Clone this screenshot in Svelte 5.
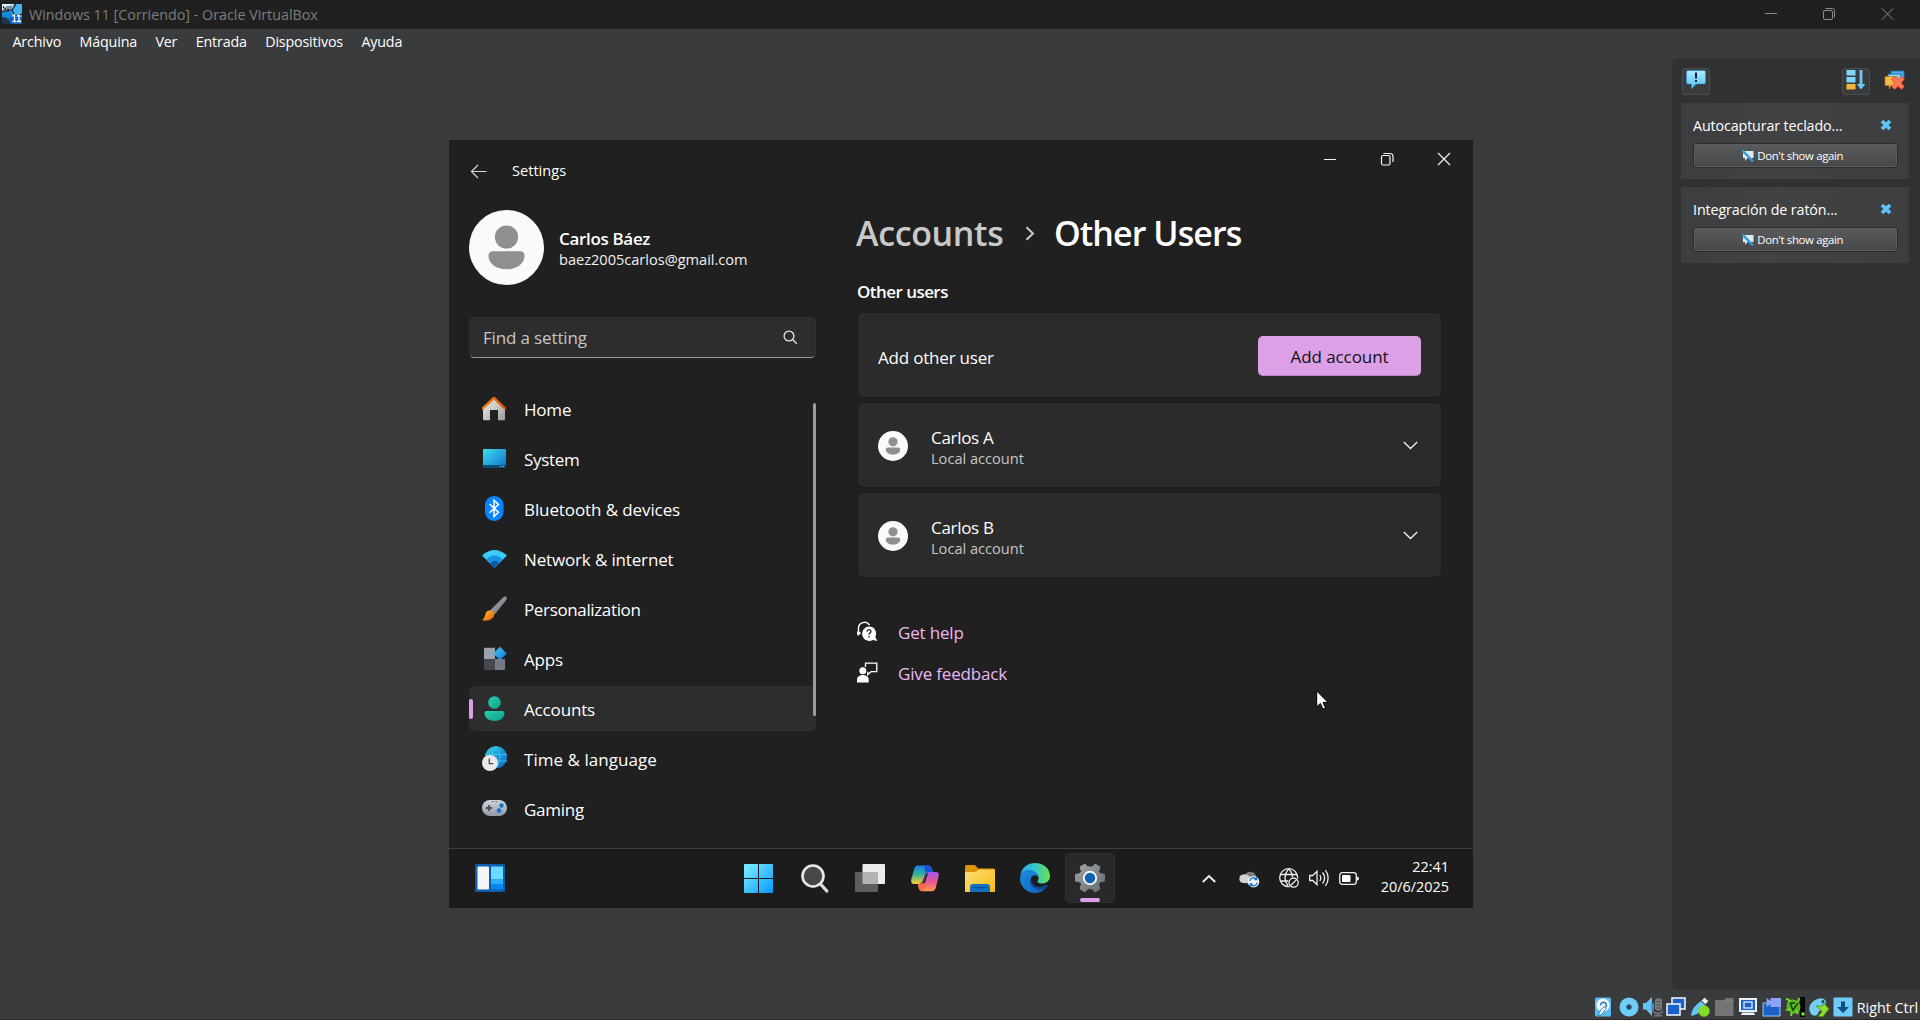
<script>
  const menus = ['Archivo', 'Máquina', 'Ver', 'Entrada', 'Dispositivos', 'Ayuda'];
  const notices = [
    { title: 'Autocapturar teclado...', spacing: -0.13 },
    { title: 'Integración de ratón...', spacing: -0.11 }
  ];
  const nav = [
    { id: 'home', label: 'Home', spacing: -0.2 },
    { id: 'system', label: 'System', spacing: -0.3 },
    { id: 'bluetooth', label: 'Bluetooth & devices', spacing: -0.1 },
    { id: 'network', label: 'Network & internet', spacing: -0.15 },
    { id: 'personalization', label: 'Personalization', spacing: -0.36 },
    { id: 'apps', label: 'Apps', spacing: -0.2 },
    { id: 'accounts', label: 'Accounts', spacing: -0.15, active: true },
    { id: 'time', label: 'Time & language', spacing: 0.05 },
    { id: 'gaming', label: 'Gaming', spacing: -0.25 }
  ];
  const users = ['Carlos A', 'Carlos B'];
</script>

{#snippet person(size)}
  <svg class="person" width={size} height={size} viewBox="0 0 75 75">
    <circle cx="37.5" cy="37.5" r="37.5" fill="#fafafa" />
    <circle cx="37.5" cy="27" r="11.6" fill="#8f8f8f" />
    <path d="M24 41.2h27q4.5 0 4.5 4.5c0 8-8 13.6-18 13.6s-18-5.600-18-13.600q0-4.500 4.500-4.500z" fill="#8f8f8f" />
  </svg>
{/snippet}

{#snippet navIcon(id)}
  <svg class="nav-icon" width="25" height="25" viewBox="0 0 25 25">
    {#if id === 'home'}
      <path d="M1 12 12 2l11 10v11q0 1.300-1.300 1.300H16V14H8v10.300H2.300Q1 24.300 1 23z" fill="url(#gHome)" />
      <path d="M1 12.300 12 2l11 10.300" fill="none" stroke="url(#gRoof)" stroke-width="2.500" stroke-linecap="round" stroke-linejoin="round" />
    {:else if id === 'system'}
      <rect x="1" y="3" width="23" height="19" rx="1" fill="url(#gSys)" />
      <path d="M1 19h23v2q0 1-1 1H2q-1 0-1-1z" fill="#084c78" />
      <path d="M18 20.500h1.200M20.500 20.500h1.200" stroke="#9fdcff" />
    {:else if id === 'bluetooth'}
      <rect x="3" y="0" width="18.500" height="25" rx="9" fill="#0a84ff" />
      <path d="M7.500 8 16.500 16.200 12 20.500V4.300l4.500 4.200-9 8.200" fill="none" stroke="#fff" stroke-width="1.500" />
    {:else if id === 'network'}
      <path d="M0 9.500Q12.500-1.500 25 9.500L12.500 22z" fill="#3bcbf6" />
      <path d="M4.300 13.500q8.200-8 16.400 0L12.500 22z" fill="#1a90e0" />
      <path d="M8 17q4.500-4.500 9 0l-4.500 5z" fill="#0b5aa8" />
    {:else if id === 'personalization'}
      <path d="M24 .8q1.500 1.200 0 3.500L13 18.300 8.500 14 20.500 2Q22.800 0 24 .8z" fill="url(#gBrush)" />
      <path d="M8 14.200q3.800.3 4.500 4C11 24.500 5 24.800 1 24.500q-1-.5 0-1.300C4.500 20 2 15 8 14.200z" fill="url(#gTip)" />
    {:else if id === 'apps'}
      <path d="M2 3q0-1.200 1-1.200h10v11.200H2z" fill="#9ba3ae" />
      <path d="M2 13h11v11H3q-1 0-1-1z" fill="#45494f" />
      <path d="M13 13h10v10q0 1-1 1h-9z" fill="#747b86" />
      <path d="m18 .7 6.700 6.800-6.700 6.800-6.700-6.800z" fill="url(#gDia)" />
    {:else if id === 'accounts'}
      <circle cx="12.500" cy="6.500" r="6.300" fill="url(#gTeal)" />
      <path d="M4.500 15h16q2 0 2 2c0 5-4.500 8-10 8s-10-3-10-8q0-2 2-2z" fill="url(#gTeal)" />
    {:else if id === 'time'}
      <circle cx="14" cy="11.200" r="11" fill="url(#gGlobe)" />
      <path d="M3 8.500h22M5 15h20M14 0q-8 11 0 22M14 0q8 11 0 22" fill="none" stroke="#3fc3ee" stroke-width=".9" />
      <circle cx="8" cy="17" r="8" fill="#e9e9ec" />
      <path d="M7.300 12.500V17.700h4" fill="none" stroke="#444" stroke-width="1.300" />
    {:else}
      <rect x="0" y="4" width="25" height="16" rx="8" fill="url(#gPad)" />
      <path d="M4 12h6M7 9v6" stroke="#4a4f57" stroke-width="1.800" />
      <circle cx="19.500" cy="9.500" r="2.200" fill="#0f72cc" />
      <circle cx="17" cy="14.500" r="2.200" fill="#0f72cc" />
      <path d="M10 5.500h1.500M13.500 5.500H15" stroke="#555" />
    {/if}
  </svg>
{/snippet}

<svg class="defs" width="0" height="0" aria-hidden="true">
  <defs>
    <linearGradient id="gHome" x1="0" y1="0" x2="1" y2="1"><stop stop-color="#f2f2f2" /><stop offset="1" stop-color="#9d9d9d" /></linearGradient>
    <linearGradient id="gRoof"><stop stop-color="#f08a1a" /><stop offset="1" stop-color="#dd4f0d" /></linearGradient>
    <linearGradient id="gSys" x1="0" y1="0" x2="1" y2="1"><stop stop-color="#3fe0ec" /><stop offset="1" stop-color="#0a6ed0" /></linearGradient>
    <linearGradient id="gBrush" x1="0" y1="0" x2="1" y2="1"><stop stop-color="#b4b9bf" /><stop offset="1" stop-color="#5f656b" /></linearGradient>
    <linearGradient id="gTip" x1="0" y1="0" x2="1" y2="1"><stop stop-color="#ffc21f" /><stop offset="1" stop-color="#ef5b14" /></linearGradient>
    <linearGradient id="gDia" x1="0" y1="0" x2="1" y2="1"><stop stop-color="#4ccbf5" /><stop offset="1" stop-color="#0c72d6" /></linearGradient>
    <linearGradient id="gTeal" x1="0" y1="0" x2="1" y2="1"><stop stop-color="#27d3b4" /><stop offset="1" stop-color="#109a86" /></linearGradient>
    <linearGradient id="gGlobe" x1="0" y1="0" x2="1" y2="1"><stop stop-color="#35d2e8" /><stop offset="1" stop-color="#0d64c4" /></linearGradient>
    <linearGradient id="gPad" x1="0" y1="0" x2="0" y2="1"><stop stop-color="#d0d6dd" /><stop offset="1" stop-color="#8f98a3" /></linearGradient>
    <linearGradient id="gWin" x1="0" y1="0" x2="1" y2="1"><stop stop-color="#7ef3ff" /><stop offset="1" stop-color="#0697ff" /></linearGradient>
    <linearGradient id="gCopA" x1="0" y1="0" x2="0" y2="1"><stop stop-color="#1b7fe8" /><stop offset=".45" stop-color="#2fae9e" /><stop offset="1" stop-color="#ffd02a" /></linearGradient>
    <linearGradient id="gCopB" x1="0" y1="0" x2="0" y2="1"><stop stop-color="#a159ec" /><stop offset=".5" stop-color="#e85598" /><stop offset="1" stop-color="#ff9a4a" /></linearGradient>
    <linearGradient id="gFold" x1="0" y1="0" x2="1" y2="1"><stop stop-color="#ffe07a" /><stop offset="1" stop-color="#fbb80f" /></linearGradient>
    <linearGradient id="gEdge"><stop stop-color="#2ba8ea" /><stop offset=".5" stop-color="#35c5c9" /><stop offset="1" stop-color="#6ae34b" /></linearGradient>
    <linearGradient id="gEdgeB" x1="0" y1="0" x2="1" y2="1"><stop stop-color="#1a8ee0" /><stop offset="1" stop-color="#0f5fb5" /></linearGradient>
    <linearGradient id="gGear" x1="0" y1="0" x2="1" y2="1"><stop stop-color="#a0a5aa" /><stop offset="1" stop-color="#646a71" /></linearGradient>
    <linearGradient id="gVb" x1="0" y1="0" x2="0" y2="1"><stop stop-color="#aeeaff" /><stop offset="1" stop-color="#4fc0f5" /></linearGradient>
  </defs>
</svg>

<div class="vm">
  <header class="titlebar">
    <svg width="20" height="20" viewBox="0 0 20 20">
      <rect width="20" height="20" fill="#46b2ee" />
      <path d="M0 0h11l-1 7H0z" fill="#e4f4fb" />
      <path d="M0 7h9l2 6H7L0 20z" fill="#1989d6" />
      <path d="M7 13h13v7H2z" fill="#1263b8" />
      <path d="M0 7.500 10 6 14 0M10 6l3 6 7-2" fill="none" stroke="#16263c" stroke-width="1.300" />
      <path d="M0 13l5 1 4 6H0z" fill="#21344f" />
      <path d="M1.500 2v2h2v1.500h-2M5 2v3.500h2V2M9 1.500v4" fill="none" stroke="#222" />
      <path d="m10.500 12 2-1v6.500M10.500 17.500h4M15 12l2-1v6.500M15 17.500h4" fill="none" stroke="#fff" stroke-width="1.300" />
    </svg>
    <span>Windows 11 [Corriendo] - Oracle VirtualBox</span>
    <svg class="host-controls" width="134" height="14" viewBox="0 0 134 14" fill="none" stroke="#8a8a8a">
      <path d="M5 6.500h12M122 1.500l11 11M133 1.500l-11 11" />
      <rect x="63.500" y="3.500" width="9" height="9" rx="1.500" />
      <path d="M65.500 1.500h7q2 0 2 2v7" />
    </svg>
  </header>

  <nav class="menubar">
    {#each menus as m}<span>{m}</span>{/each}
  </nav>

  <div class="workspace">
    <div class="guest">
      <div class="settings">
        <aside class="side">
          <div class="app-head">
            <svg width="18" height="15" viewBox="0 0 18 15" fill="none" stroke="#d8d8d8" stroke-width="1.200"><path d="M16.500 7.500H1.500M8 1 1.500 7.500 8 14" /></svg>
            <span>Settings</span>
          </div>
          <div class="profile">
            {@render person(75)}
            <div>
              <div class="name">Carlos Báez</div>
              <div class="email">baez2005carlos@gmail.com</div>
            </div>
          </div>
          <div class="search">
            <span>Find a setting</span>
            <svg width="15" height="15" viewBox="0 0 15 15" fill="none" stroke="#e8e8e8" stroke-width="1.300"><circle cx="6" cy="6" r="4.900" /><path d="m9.500 9.500 4.300 4.300" /></svg>
          </div>
          <div class="nav">
            {#each nav as item}
              <div class="nav-row" class:active={item.active}>
                {@render navIcon(item.id)}
                <span style:letter-spacing="{item.spacing}px">{item.label}</span>
              </div>
            {/each}
            <div class="scroll"></div>
          </div>
        </aside>

        <main>
          <div class="controls">
            <svg width="171" height="38" viewBox="0 0 171 38" fill="none" stroke="#f2f2f2" stroke-width="1.200">
              <path d="M22 19.500h12M136 13l12 12M148 13l-12 12" />
              <rect x="79.500" y="15.500" width="8.500" height="9.500" rx="1.500" />
              <path d="M81.500 13.500h6.500q3 0 3 3V22" />
            </svg>
          </div>
          <h1>
            <span class="crumb">Accounts</span>
            <svg width="10" height="15" viewBox="0 0 10 15" fill="none" stroke="#c8c8c8" stroke-width="2.100"><path d="m1.500 1.200 6.500 6.300-6.500 6.300" /></svg>
            <span class="here">Other Users</span>
          </h1>
          <h2>Other users</h2>
          <div class="cards">
            <div class="card">
              <span class="add-label">Add other user</span>
              <button>Add account</button>
            </div>
            {#each users as u}
              <div class="card">
                {@render person(30)}
                <div class="user">
                  <div class="user-name">{u}</div>
                  <div class="user-type">Local account</div>
                </div>
                <svg class="chev" width="15" height="9" viewBox="0 0 15 9" fill="none" stroke="#eee" stroke-width="1.400"><path d="m.8 1 6.700 6.500L14.200 1" /></svg>
              </div>
            {/each}
          </div>
          <div class="links">
            <div class="link">
              <svg width="21" height="21" viewBox="0 0 21 21">
                <path d="M1.500 14.200V7.500a6 6 0 0 1 11-3.500" fill="none" stroke="#fff" stroke-width="1.400" />
                <path d="M0 10.500 3.500 11v2L.3 14.500z" fill="#fff" />
                <path d="M12 5.500a7 7 0 0 1 6.300 10.200l2 4.300-4.500-1A7.200 7.200 0 1 1 12 5.500z" fill="#fff" />
                <path d="M10 10.700q.2-2 2-2t2 1.700c0 1.500-2 1.600-2 3.300M12 15v1.500" fill="none" stroke="#222" stroke-width="1.300" />
              </svg>
              <span>Get help</span>
            </div>
            <div class="link">
              <svg width="21" height="21" viewBox="0 0 21 21">
                <path d="M8.500 5V1.200h11.300v8.500H14l-3.300 3V9.700" fill="none" stroke="#fff" stroke-width="1.300" />
                <circle cx="5.800" cy="8.800" r="3.500" fill="#fff" />
                <path d="M0 20.500v-3c0-6 11.700-6 11.700 0v3z" fill="#fff" />
              </svg>
              <span>Give feedback</span>
            </div>
          </div>
        </main>
      </div>

      <footer class="taskbar">
        <svg width="30" height="28" viewBox="0 0 30 28">
          <rect width="30" height="28" rx="1.500" fill="#0c5fae" />
          <rect x="2.500" y="2.500" width="11.500" height="23" rx="1" fill="#f4f4f4" />
          <path d="M16 2.500h12v13H16z" fill="#6adaff" /><path d="M16 15.500h12v5H16z" fill="#26b0fa" /><path d="M16 20.500h12v5H16z" fill="#0a84ee" />
        </svg>
        <div class="apps">
          <div class="app start">
            <svg width="29" height="29" viewBox="0 0 29 29"><path d="M1 0h13v14H0V1q0-1 1-1zM15 0h13q1 0 1 1v13H15zM0 15h14v14H1q-1 0-1-1zM15 15h14v13q0 1-1 1H15z" fill="url(#gWin)" /></svg>
          </div>
          <div class="app">
            <svg width="28" height="29" viewBox="0 0 28 29"><path d="m19.500 20 6.300 7" stroke="#dcdce0" stroke-width="3.200" stroke-linecap="round" /><circle cx="12" cy="12" r="10.500" fill="#474747" stroke="#e9e9ec" stroke-width="2.600" /></svg>
          </div>
          <div class="app">
            <svg width="30" height="28" viewBox="0 0 30 28"><rect x="7.500" width="22.500" height="20" rx="1" fill="#ececec" /><rect y="8" width="23" height="20" rx="1" fill="#5e5e5e" /><path d="M7.500 8H23v12H7.500z" fill="#b2b2b2" /></svg>
          </div>
          <div class="app">
            <svg width="28" height="27" viewBox="0 0 28 27">
              <path d="M7 .5h10q3 0 4 3.500L22 7h-4.500q-2 0-3 2L11 17q-1 2-3.500 2H3Q-.8 19 .4 14L3 4.500Q4 .5 7 .5z" fill="url(#gCopA)" />
              <path d="M13 .5h4q3 0 4 3.500L22 7h-4.500q-2 0-3 2z" fill="#1c50d8" />
              <path d="M20.500 7H25q3.700 0 2.600 4.500L25 22q-1 4.300-4.500 4.300H12q-3.500 0-4.300-3.300L7 19h2q2 0 3-2.500L14.500 9q.8-2 3-2z" fill="url(#gCopB)" />
              <path d="m7 19 .7 4q.8 3.300 4.300 3.300L15 18q-1 1-3 1z" fill="#ff6a4c" />
              <path d="m12 18.800 2.800-9.300q.4-1.500 2.200-1.500l-2.800 9q-.5 1.800-2.200 1.800z" fill="#1c1c1c" />
            </svg>
          </div>
          <div class="app">
            <svg width="30" height="27" viewBox="0 0 30 27">
              <path d="M0 1.500Q0 0 1.500 0H9q1 0 2 1l2 2.500h15.500Q30 3.500 30 5v5H0z" fill="#dc9305" />
              <path d="M0 7h10q1 0 2-1l1.500-1.500H30V27H0z" fill="url(#gFold)" />
              <path d="M5 27v-5q0-3 3-3h14q3 0 3 3v5z" fill="#0f6fc0" /><path d="M8.500 22.700h13" stroke="#083f78" />
            </svg>
          </div>
          <div class="app">
            <svg width="30" height="30" viewBox="0 0 30 30">
              <path d="M.3 12C2 4 8 0 15 0c9 0 15 6 15 13 0 5-4 7.500-8 7.500-3.500 0-5.500-1.500-4-3 1-1.200 1-4-1-6C13 7 4 6 .3 12z" fill="url(#gEdge)" />
              <path d="M.1 14C1 8 6.500 6.500 11 7.300c4 .7 7 3.400 7 6.700-1-2-3.500-2.500-5.500-1-4 3-1 10 5 11 4 .7 7-.7 9-2 .8-.4 1 .3.500 1C24 27.500 20 30 15 30 6 30-.7 22.500.1 14z" fill="url(#gEdgeB)" />
              <path d="M12.500 13C9 16 9 22 14 25s10 1.500 13.500-1.500c.8-1 .3-1.900-.5-1.500-2 1.300-5 2.600-9 2-6-1-9-8-5.500-11z" fill="#10489a" />
            </svg>
          </div>
          <div class="app running">
            <svg width="30" height="30" viewBox="0 0 30 30">
              <path d="m12.500 4 1-.300-1 .300-2.500-3-5 3 1.500 4.500-1.500 2L.5 11.500v6.500l4.500 1 1.500 2L5 26l5 3 3-3.300h4L20 29l5-3-1.500-5 1.500-2 4.700-1v-6.500L25 10.500l-1.500-2L25 4l-5-3-2.500 3z" fill="url(#gGear)" stroke="url(#gGear)" stroke-linejoin="round" />
              <circle cx="15" cy="15" r="6.200" fill="#0f62b5" stroke="#f5f5f5" stroke-width="1.900" />
            </svg>
          </div>
        </div>
        <div class="tray">
          <svg class="up" width="14" height="9" viewBox="0 0 14 9" fill="none" stroke="#f2f2f2" stroke-width="1.900"><path d="m.8 8 6.200-6 6.200 6" /></svg>
          <svg class="cloud" width="21" height="18" viewBox="0 0 21 18">
            <path d="M6 5a6 6 0 0 1 11 1q2 1 2.500 4H6z" fill="#7c7c7c" />
            <path d="M4 13a4.300 4.300 0 0 1 0-8.500q4-1 6 1.500l6 5-3 2.500z" fill="#d2d2d2" />
            <circle cx="14.500" cy="11.700" r="5.800" fill="#f4f4f4" />
            <path d="M10.800 11a3.800 3.800 0 0 1 6.700-1.800M18.200 12.500a3.800 3.800 0 0 1-6.700 1.800M17.800 7v2.500h-2.500M11.200 16.500V14h2.500" fill="none" stroke="#1473cf" stroke-width="1.300" />
          </svg>
          <svg class="globe" width="20" height="20" viewBox="0 0 20 20" fill="none" stroke="#f0f0f0" stroke-width="1.300">
            <circle cx="9.700" cy="9.700" r="9" /><path d="M1.500 6.500h16.500M1.500 13h9M9.700.7Q2.500 9.500 9.500 18.700M9.700.7q3.500 3.500 3.800 8.500" />
            <circle cx="14.600" cy="14.600" r="5.800" fill="#1c1c1c" stroke="none" /><circle cx="14.600" cy="14.600" r="4.600" /><path d="m11.400 17.800 6.400-6.400" />
          </svg>
          <svg class="spk" width="20" height="18" viewBox="0 0 20 18" fill="none" stroke="#f0f0f0" stroke-width="1.300">
            <path d="M.7 6.500v5h3L8 15.800V2.200L3.700 6.500zM10.800 6q2 3 0 6M13.600 3.500q4 5.500 0 11M16.400 1q5.500 8 0 16" />
          </svg>
          <svg class="bat" width="20" height="13" viewBox="0 0 20 13"><rect x=".7" y=".7" width="16.600" height="11.600" rx="2.500" fill="none" stroke="#f0f0f0" stroke-width="1.300" /><rect x="3" y="3" width="8.500" height="7" rx="1" fill="#fff" /><path d="M18 4.500q2 0 2 2t-2 2z" fill="#f0f0f0" /></svg>
          <div class="clock"><div>22:41</div><div>20/6/2025</div></div>
        </div>
      </footer>

      <svg class="cursor" width="14" height="21" viewBox="0 0 14 21"><path d="M.7 1v15.800l3.700-3.400 2.500 5.800 2.600-1.100L7 12.400h5z" fill="#fff" stroke="#000" /></svg>
    </div>

    <section class="panel">
      <div class="tools">
        <div class="tool">
          <svg width="20" height="20" viewBox="0 0 20 20"><path d="M2 .5h16q1.500 0 1.500 1.500v10.500q0 1.500-1.500 1.500h-8L5.500 19v-5H2Q.5 14 .5 12.500V2Q.5.500 2 .500z" fill="url(#gVb)" stroke="#2a8fd0" stroke-width=".6" /><path d="M10 2.500V8.500M10 10v2" stroke="#10222e" stroke-width="2" /></svg>
        </div>
        <div class="tool push">
          <svg width="20" height="20" viewBox="0 0 20 20"><path d="M.5 0h9v5.500h-9zM.5 7h9v5.500h-9z" fill="#7fd8fb" /><path d="M.5 14h9v5.500h-9z" fill="#f7b53c" /><path d="M15 0v17" stroke="#6cc8f6" stroke-width="2.800" /><path d="M10.800 14h8.600L15 19.600z" fill="#6cc8f6" /></svg>
        </div>
        <svg class="clear" width="21" height="20" viewBox="0 0 21 20">
          <path d="M7 1h13v8H7z" fill="#4fb3ee" stroke="#23689c" /><path d="M4 4h13v8H4z" fill="#8ed7fa" stroke="#23689c" />
          <path d="M1 6.500h13v9H7L5 19v-3.500H1z" fill="#f8b84a" stroke="#b86e10" stroke-width=".6" />
          <path d="m7.500 9 3-2.500 3.500 3 3.500-3 3 2.500-3 4 3 3.800-3 2.700-3.500-3-3.500 3-3-2.700 3-3.800z" fill="#ff7850" stroke="#c93a17" stroke-width=".6" />
        </svg>
      </div>
      {#each notices as n}
        <div class="notice">
          <div class="notice-head">
            <span style:letter-spacing="{n.spacing}px">{n.title}</span>
            <svg width="12" height="12" viewBox="0 0 12 12"><path d="m2 2 8 8M10 2 2 10" stroke="#5ec5f8" stroke-width="3.800" /></svg>
          </div>
          <div class="again">
            <svg width="12" height="12" viewBox="0 0 12 12"><path d="M1 1h10.500v7H5.500L3 11V8H1z" fill="#dfe9ee" /><path d="m.5.5 10.500 11" stroke="#2f9be0" stroke-width="2.400" /></svg>
            <span>Don't show again</span>
          </div>
        </div>
      {/each}
    </section>
  </div>

  <footer class="status">
    <svg width="20" height="20" viewBox="0 0 20 20"><rect x="0" y=".5" width="16" height="19" rx="1.500" fill="#58bdf2" /><circle cx="8" cy="8.200" r="6.600" fill="#f5fbff" /><path d="M3 18.500 6 12.500l3.500-3 1.500 2-4 6z" fill="#f5fbff" stroke="#2078b5" stroke-width=".9" /><path d="M5.500 8.500a3 3 0 1 1 5 2" fill="none" stroke="#2078b5" stroke-width="1.500" /></svg>
    <svg width="20" height="20" viewBox="0 0 20 20"><circle cx="10" cy="10" r="9.500" fill="#6ecdf9" /><circle cx="10" cy="10" r="2.500" fill="#33383d" stroke="#2c86bb" /></svg>
    <svg width="20" height="20" viewBox="0 0 20 20"><path d="M0 6h3l6-6v19l-6-6.500H0z" fill="#63c5f6" /><path d="M8 6.500h3v6H8z" fill="#3f96cc" /><rect x="12" y="1.500" width="7" height="12" rx="2.500" fill="#7b7d7f" /><path d="M10 13q0 3.500 5 3.500t5-3.500M15 16v3M11 18.700h8" stroke="#77797b" stroke-width="1.400" fill="none" /><path d="M13 5h5M13 8h5M13 11h5" stroke="#4c4e50" /></svg>
    <svg width="20" height="20" viewBox="0 0 20 20"><rect x="6" y="1" width="13" height="11" fill="#1a62c9" stroke="#e9eef5" stroke-width="1.600" /><rect x="1" y="7" width="13" height="11" fill="#1a62c9" stroke="#e9eef5" stroke-width="1.600" /></svg>
    <svg width="20" height="20" viewBox="0 0 20 20"><path d="M1 18Q2 10 11 4l4 4q-3 8-13 11z" fill="#63c3f2" /><path d="m11.500 3.500 3-3L18.500 4l-3 3.500z" fill="#f2f2f2" stroke="#555" stroke-width=".7" /><circle cx="14" cy="14" r="5.700" fill="#7fdd28" /></svg>
    <svg width="20" height="20" viewBox="0 0 20 20"><path d="M1 3.500h9l2-2.500h7.500v18H1z" fill="#737475" /><path d="M1 4h18.500" stroke="#868788" /></svg>
    <svg width="20" height="20" viewBox="0 0 20 20"><rect x="1" y="1" width="18" height="14" fill="#e9f0f8" /><rect x="3" y="3" width="14" height="10" fill="#1a62c9" /><rect x="6" y="5" width="8" height="6" fill="none" stroke="#dcecff" stroke-width="1.300" /><path d="M4 15.500h12l1 2.500H3z" fill="#e9f0f8" /></svg>
    <svg width="20" height="20" viewBox="0 0 20 20"><path d="M1 6h17v13H1z" fill="#1a62c9" stroke="#9dc5f2" /><path d="M8.500 1H19v9H8.500V7L4.500 10V1l4 3z" fill="#8ea2fa" /></svg>
    <svg width="20" height="20" viewBox="0 0 20 20"><path d="M15 0h5v20h-5z" fill="#050505" /><ellipse cx="8.500" cy="9.500" rx="6.500" ry="7.500" transform="rotate(-40 8.500 9.500)" fill="#58b91f" /><path d="M1 2q3 0 4 3M14 1q0 3-2 4M1 13l4-1M6 19l1-4M13 17l-2-4" stroke="#74d82b" stroke-width="2" /><path d="m5 6 3 7 5-7M5 6h5" fill="none" stroke="#173d08" stroke-width="1.400" /><path d="M16.500 15.500h3v3h-3z" fill="#7cf22a" /></svg>
    <svg width="20" height="20" viewBox="0 0 20 20"><path d="M2 17Q-3 9 6 3q8-4 11 1 0 4-4 6l-5 8q-3 2-6-1z" fill="#76cdf5" /><path d="M7 9h7V5l6 7-6 7.500H9l4-5z" fill="#8ede31" stroke="#3e8b12" stroke-width=".7" /><circle cx="14" cy="4.500" r="1.500" fill="#1c4560" /></svg>
    <svg width="20" height="20" viewBox="0 0 20 20"><rect x=".5" y=".5" width="19" height="19" rx="1" fill="#6ecbf8" /><path d="M8 4.500h4V10h4l-6 6-6-6h4z" fill="#0d4f86" /></svg>
    <span>Right Ctrl</span>
  </footer>
</div>

<style>
  :global(body) { background: #3a3b3d; overflow: hidden; }
  .defs { position: absolute; }
  .vm {
    width: 1920px; height: 1020px; display: flex; flex-direction: column;
    background: #3a3b3d; color: #fff; font-family: "Open Sans", "Noto Sans", sans-serif;
    font-size: 17px; box-sizing: border-box; border-bottom: 1px solid #2b2b2c; overflow: hidden;
  }
  svg { display: block; flex: none; }
  span, div { white-space: nowrap; }
  .titlebar { flex: none; height: 29px; display: flex; align-items: center; background: #202020; padding: 0 26px 1px 2px; box-sizing: border-box; }
  .titlebar span { margin-left: 7px; font-size: 14.3px; color: #7d7d7d; }
  .host-controls { margin-left: auto; }
  .menubar { flex: none; height: 25px; box-sizing: border-box; padding: 1px 12px 0 12.5px; display: flex; gap: 18.4px; align-items: center; border-bottom: 1px solid #343535; font-size: 14.3px; letter-spacing: -0.17px; }
  .workspace { flex: 1; display: flex; min-height: 0; }

  .guest { position: relative; margin: 86px 0 0 449px; width: 1024px; height: 768px; background: #202020; display: flex; flex-direction: column; }
  .settings { flex: 1; display: flex; min-height: 0; }
  .side { width: 347px; padding: 0 40px 0 20px; }
  .app-head { height: 62px; display: flex; align-items: center; padding-left: 1px; gap: 24px; font-size: 14.6px; }
  .app-head span { padding-bottom: 2px; }
  .profile { margin-top: 8px; height: 75px; display: flex; align-items: center; gap: 15px; }
  .name { font-weight: 600; line-height: 22px; letter-spacing: -0.33px; }
  .email { font-size: 14.6px; line-height: 18px; letter-spacing: -0.02px; color: #f0f0f0; }
  .search { margin-top: 32px; height: 41px; box-sizing: border-box; display: flex; align-items: center; justify-content: space-between; padding: 0 17px 1px 13px; background: #2d2d2d; border-radius: 5px; border: 1px solid #303030; border-bottom-color: #9a9a9a; color: #c6c6c6; letter-spacing: -0.15px; }
  .nav { position: relative; margin-top: 28px; display: flex; flex-direction: column; gap: 5px; }
  .nav-row { position: relative; height: 45px; display: flex; align-items: center; padding-left: 13px; gap: 17px; border-radius: 5px; }
  .nav-row span { padding-top: 2px; }
  .nav-row.active { background: #2d2d2d; }
  .nav-row.active::before { content: ""; position: absolute; left: 0; top: 13px; width: 4px; height: 20px; border-radius: 2px; background: #dba0e5; }
  .scroll { position: absolute; right: 0; top: 17px; width: 3px; height: 313px; border-radius: 2px; background: #9b9b9b; }

  main { flex: 1; }
  .controls { height: 38px; display: flex; justify-content: flex-end; }
  h1 { margin: 32px 0 0; height: 46px; display: flex; align-items: center; font-size: 34px; line-height: 46px; font-weight: 600; }
  .crumb { color: #c9c9c9; letter-spacing: -0.35px; width: 169px; }
  .here { letter-spacing: -0.93px; margin-left: 19px; }
  h1 svg { margin-top: 1px; }
  h2 { margin: 24px 0 9px 1px; font-size: 17px; line-height: 24px; font-weight: 600; letter-spacing: -0.55px; }
  .cards { margin-left: 2px; width: 583px; display: flex; flex-direction: column; gap: 6px; }
  .card { height: 84px; box-sizing: border-box; padding: 0 20px; display: flex; align-items: center; background: #2b2b2b; border-radius: 5px; box-shadow: 0 0 0 1px #1d1d1d; }
  .add-label { padding-top: 5px; letter-spacing: -0.2px; }
  button { margin: 1px 0 0 auto; height: 40px; width: 163px; padding: 2px 0 0; border: 0; border-bottom: 1px solid #b785bf; border-radius: 5px; background: #dba0e5; color: #111; font: inherit; letter-spacing: -0.08px; }
  .card .person { margin-top: 2px; }
  .user { margin-left: 23px; padding-top: 5px; }
  .user-name { line-height: 22px; letter-spacing: -0.3px; }
  .user-type { line-height: 19px; font-size: 14.6px; color: #c6c6c6; }
  .chev { margin: 1px 3px 0 auto; }
  .links { margin-top: 34px; }
  .link { height: 41px; display: flex; align-items: center; gap: 20px; padding-left: 1px; color: #eab8f2; letter-spacing: -0.17px; }
  .link span { padding-top: 2px; }

  .taskbar { flex: none; height: 60px; box-sizing: border-box; border-top: 1px solid #3f3f3f; background: #1c1c1c; display: flex; align-items: center; padding: 0 24px 1px 26px; }
  .apps { margin-left: 227.5px; display: flex; }
  .app { width: 55px; height: 50px; display: flex; align-items: center; justify-content: center; box-sizing: border-box; }
  .start { padding-right: 3px; }
  .running { position: relative; width: 50px; margin-left: 2.5px; background: #292929; border: 1px solid #303030; border-radius: 5px; }
  .running::after { content: ""; position: absolute; bottom: 0; left: 14px; width: 20px; height: 4px; border-radius: 2px; background: #dba0e5; }
  .tray { flex: 1; margin-left: 87px; display: flex; align-items: center; }
  .cloud { margin: 2px 0 0 23px; }
  .globe { margin-left: 19px; }
  .spk, .bat { margin-left: 10px; }
  .clock { margin-left: auto; text-align: right; font-size: 14.4px; line-height: 20px; padding-bottom: 2px; }
  .cursor { position: absolute; left: 867px; top: 550px; }

  .panel { margin: 6px 0 0 201px; flex: 1; background: #303133; box-shadow: 0 0 2px 0 #161718; padding: 8px 11px 0 7px; }
  .tools { height: 27px; display: flex; padding-left: 1px; margin-bottom: 8px; }
  .tool { width: 28px; height: 27px; box-sizing: border-box; border: 1px solid #4c4d4f; border-radius: 3px; background: #3a3b3d; padding: 1px 3px; }
  .push { margin-left: auto; }
  .clear { margin: 2px 4px 0 14px; }
  .notice { height: 76px; margin-bottom: 8px; box-sizing: border-box; padding: 10px 11px 0 12px; background: linear-gradient(100deg, #3c3d3f, #414244 40%, #3d3e40); }
  .notice-head { display: flex; height: 30px; justify-content: space-between; padding: 0 6px 0 0; font-size: 14.3px; line-height: 26px; }
  .notice-head svg { margin-top: 6px; }
  .again { height: 25px; box-sizing: border-box; display: flex; align-items: center; justify-content: center; gap: 3.500px; border: 1px solid #2b2c2d; border-radius: 3px; background: linear-gradient(#5a5b5d, #464749); box-shadow: inset 0 0 0 1px #5b5c5e; font-size: 11.4px; letter-spacing: -0.34px; padding-right: 6px; }

  .status { flex: none; height: 31px; display: flex; align-items: center; padding: 7px 0 1px 1595px; gap: 3.8px; box-sizing: border-box; font-size: 14.3px; }
  .status span { margin-left: 0; padding-top: 2px; }
</style>
